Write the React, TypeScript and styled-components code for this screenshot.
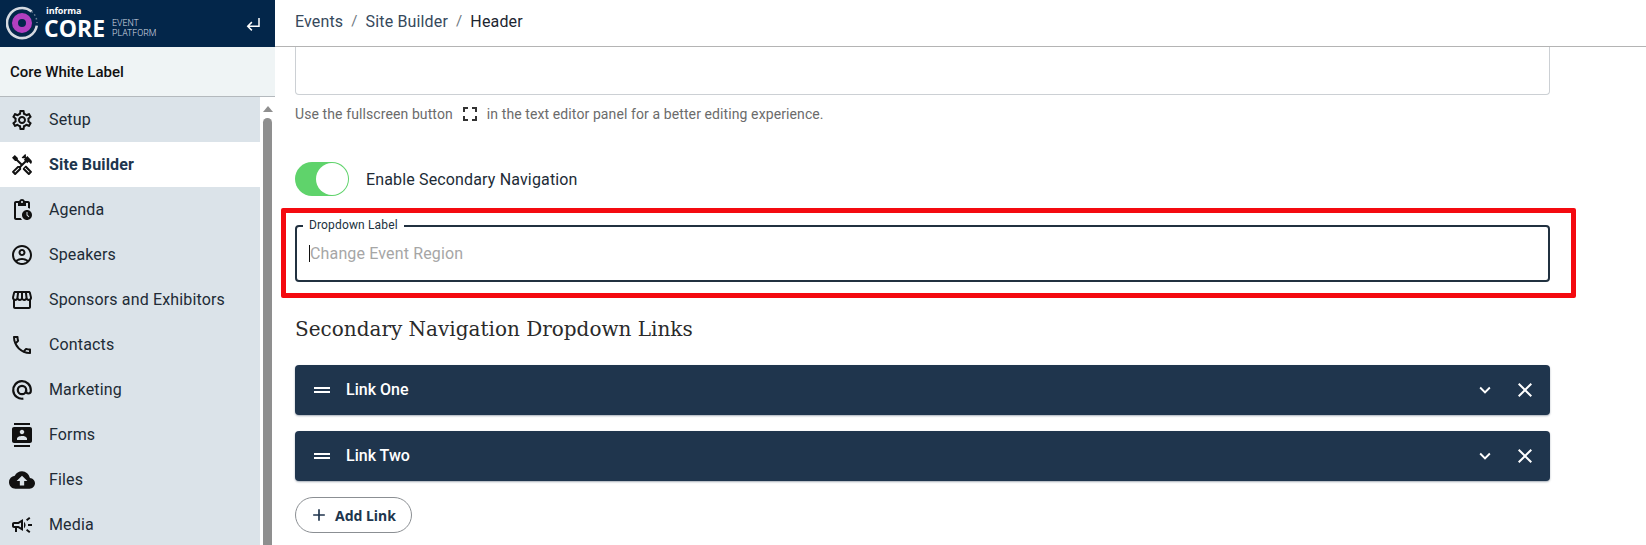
import styled, { createGlobalStyle } from 'styled-components';
import {
  MdAdd,
  MdClose,
  MdCloudUpload,
  MdContacts,
  MdDragHandle,
  MdExpandMore,
  MdFullscreen,
  MdOutlineAccountCircle,
  MdOutlineCall,
  MdOutlineCampaign,
  MdOutlineHandyman,
  MdOutlinePendingActions,
  MdOutlineSettings,
  MdOutlineStorefront,
} from 'react-icons/md';

const MarketingIcon = ({ size }: { size: number }) => (
  <svg width={size} height={size} viewBox="0 0 24 24" fill="none" stroke="currentColor" strokeWidth="2.4">
    <path d="M13.5 21.4A9.6 9.6 0 1 1 21.6 12v1.2a2.6 2.6 0 0 1-5.2 0V12" />
    <circle cx="12" cy="12" r="4.6" />
  </svg>
);

const navItems = [
  { label: 'Setup', icon: MdOutlineSettings, size: 24 },
  { label: 'Site Builder', icon: MdOutlineHandyman, size: 24, active: true },
  { label: 'Agenda', icon: MdOutlinePendingActions, size: 24 },
  { label: 'Speakers', icon: MdOutlineAccountCircle, size: 24 },
  { label: 'Sponsors and Exhibitors', icon: MdOutlineStorefront, size: 24 },
  { label: 'Contacts', icon: MdOutlineCall, size: 24 },
  { label: 'Marketing', icon: MarketingIcon, size: 22 },
  { label: 'Forms', icon: MdContacts, size: 24 },
  { label: 'Files', icon: MdCloudUpload, size: 26 },
  { label: 'Media', icon: MdOutlineCampaign, size: 24 },
];

const Logo = () => (
  <LogoWrap>
    <svg width="36" height="36" viewBox="0 0 36 36">
      <path d="M25.6 5.5A15 15 0 1 0 30.8 19.6" fill="none" stroke="#d5dae1" strokeWidth="2.6" />
      <path d="M25.6 5.5A15 15 0 0 1 31 17" fill="none" stroke="#6f8296" strokeWidth="1.5" strokeDasharray="1.5 2.5" />
      <circle cx="16" cy="17" r="7" fill="none" stroke="#b23fc0" strokeWidth="6" />
    </svg>
    <LogoText>
      <LogoBrand>informa</LogoBrand>
      <LogoLine>
        <LogoCore>CORE</LogoCore>
        <LogoSub>
          <span>EVENT</span>
          <span>PLATFORM</span>
        </LogoSub>
      </LogoLine>
    </LogoText>
  </LogoWrap>
);

const App = () => {
  return (
    <>
      <GlobalStyle />
      <Page>
        <Sidebar>
          <Brand>
            <Logo />
            <svg width="18" height="18" viewBox="0 0 24 24" fill="none" stroke="#fff" strokeWidth="2">
              <path d="M20 4v11H5M10.5 9.5 5 15l5.5 5.5" />
            </svg>
          </Brand>
          <EventName>Core White Label</EventName>
          <NavArea>
            <Nav>
              {navItems.map(item => (
                <NavItem key={item.label} $active={item.active}>
                  <NavIcon>
                    <item.icon size={item.size} />
                  </NavIcon>
                  {item.label}
                </NavItem>
              ))}
            </Nav>
            <Scrollbar>
              <ScrollArrow />
              <ScrollThumb />
            </Scrollbar>
          </NavArea>
        </Sidebar>
        <Main>
          <Breadcrumbs>
            <Crumb>Events</Crumb>
            <Slash>/</Slash>
            <Crumb>Site Builder</Crumb>
            <Slash>/</Slash>
            <Crumb $current>Header</Crumb>
          </Breadcrumbs>
          <Content>
            <EditorTail />
            <HelpText>
              Use the fullscreen button
              <MdFullscreen size={24} color="#333" />
              in the text editor panel for a better editing experience.
            </HelpText>
            <SwitchRow>
              <Switch>
                <SwitchKnob />
              </Switch>
              <SwitchLabel>Enable Secondary Navigation</SwitchLabel>
            </SwitchRow>
            <Field>
              <Legend>Dropdown Label</Legend>
              <Caret />
              <Placeholder>Change Event Region</Placeholder>
              <Highlight />
            </Field>
            <Heading>Secondary Navigation Dropdown Links</Heading>
            <LinkRow>
              <MdDragHandle size={24} />
              <LinkTitle>Link One</LinkTitle>
              <MdExpandMore size={22} />
              <CloseIcon size={24} />
            </LinkRow>
            <LinkRow>
              <MdDragHandle size={24} />
              <LinkTitle>Link Two</LinkTitle>
              <MdExpandMore size={22} />
              <CloseIcon size={24} />
            </LinkRow>
            <AddButton>
              <MdAdd size={20} />
              Add Link
            </AddButton>
          </Content>
        </Main>
      </Page>
    </>
  );
};

export default App;

const GlobalStyle = createGlobalStyle`
  html, body {
    margin: 0;
    padding: 0;
    background: #fff;
    overflow: hidden;
  }
  * {
    box-sizing: border-box;
  }
`;

const Page = styled.div`
  display: flex;
  width: 1646px;
  height: 545px;
  overflow: hidden;
  font-family: Roboto, "Liberation Sans", sans-serif;
  letter-spacing: 0.15px;
  color: #212b36;
`;

const Sidebar = styled.aside`
  display: flex;
  flex-direction: column;
  flex: 0 0 275px;
  height: 545px;
`;

const Brand = styled.div`
  display: flex;
  align-items: center;
  justify-content: space-between;
  height: 47px;
  padding: 0 13px 0 6px;
  background: #03264a;
  color: #fff;
`;

const LogoWrap = styled.div`
  display: flex;
  align-items: center;
  gap: 2px;
`;

const LogoText = styled.div`
  display: flex;
  flex-direction: column;
  margin-top: -4px;
`;

const LogoBrand = styled.div`
  margin-left: 2px;
  font-family: "Open Sans", sans-serif;
  font-size: 9px;
  font-weight: 700;
  line-height: 10px;
  letter-spacing: -0.1px;
`;

const LogoLine = styled.div`
  display: flex;
  align-items: center;
  gap: 7px;
  margin-top: 2px;
`;

const LogoCore = styled.div`
  font-family: "Open Sans", sans-serif;
  font-size: 23px;
  font-weight: 700;
  line-height: 20px;
  letter-spacing: 0;
`;

const LogoSub = styled.div`
  display: flex;
  flex-direction: column;
  font-size: 8.8px;
  font-weight: 300;
  line-height: 10px;
  letter-spacing: 0;
  color: #d5dce4;
`;

const EventName = styled.div`
  display: flex;
  align-items: center;
  height: 50px;
  padding-left: 10px;
  background: #eff4f5;
  border-bottom: 1px solid #b4b9bd;
  font-size: 15px;
  font-weight: 500;
  letter-spacing: 0;
  color: #111;
`;

const NavArea = styled.div`
  display: flex;
  flex: 1;
  min-height: 0;
`;

const Nav = styled.nav`
  flex: 0 0 260px;
  background: #dbe3e9;
`;

const NavItem = styled.div<{ $active?: boolean }>`
  display: flex;
  align-items: center;
  height: 45px;
  font-size: 16px;
  font-weight: ${p => (p.$active ? 700 : 400)};
  background: ${p => (p.$active ? '#fff' : 'transparent')};
  color: ${p => (p.$active ? '#20354d' : '#212b36')};
`;

const NavIcon = styled.span`
  display: flex;
  justify-content: center;
  flex: 0 0 49px;
  padding-right: 5px;
  color: #111;
`;

const Scrollbar = styled.div`
  display: flex;
  flex-direction: column;
  align-items: center;
  flex: 0 0 15px;
  padding-top: 9px;
`;

const ScrollArrow = styled.div`
  width: 0;
  height: 0;
  border-left: 5px solid transparent;
  border-right: 5px solid transparent;
  border-bottom: 6px solid #8f8f8f;
`;

const ScrollThumb = styled.div`
  flex: 1;
  width: 9px;
  margin-top: 6px;
  border-radius: 5px 5px 0 0;
  background: #8f8f8f;
`;

const Main = styled.main`
  display: flex;
  flex-direction: column;
  flex: 1;
  min-width: 0;
`;

const Breadcrumbs = styled.div`
  display: flex;
  align-items: center;
  gap: 8px;
  height: 47px;
  padding: 0 0 4px 20px;
  border-bottom: 1px solid #b4b4b4;
  font-size: 16px;
`;

const Crumb = styled.span<{ $current?: boolean }>`
  color: ${p => (p.$current ? '#1c2530' : '#36495c')};
`;

const Slash = styled.span`
  color: #6d7780;
  font-size: 15px;
`;

const Content = styled.div`
  display: flex;
  flex-direction: column;
  padding: 0 96px 0 20px;
`;

const EditorTail = styled.div`
  height: 48px;
  border: 1px solid #ccd0d4;
  border-top: none;
  border-radius: 0 0 4px 4px;
`;

const HelpText = styled.div`
  display: flex;
  align-items: center;
  gap: 5px;
  height: 22px;
  margin-top: 8px;
  font-size: 14px;
  letter-spacing: 0.1px;
  color: #6b6b6b;
`;

const SwitchRow = styled.div`
  display: flex;
  align-items: center;
  gap: 17px;
  margin-top: 37px;
`;

const Switch = styled.div`
  display: flex;
  justify-content: flex-end;
  align-items: center;
  width: 54px;
  height: 34px;
  padding-right: 1px;
  border-radius: 17px;
  background: #5fd36b;
`;

const SwitchKnob = styled.div`
  width: 32px;
  height: 32px;
  border-radius: 50%;
  background: #fff;
`;

const SwitchLabel = styled.span`
  font-size: 16px;
  color: #212b36;
`;

const Field = styled.div`
  position: relative;
  display: flex;
  align-items: center;
  height: 57px;
  margin-top: 29px;
  padding-left: 12px;
  border: 2px solid #213140;
  border-radius: 4px;
`;

const Legend = styled.span`
  position: absolute;
  top: -9px;
  left: 6px;
  padding: 0 6px;
  background: #fff;
  font-size: 12px;
  line-height: 15px;
  color: #213140;
`;

const Caret = styled.span`
  width: 1px;
  height: 17px;
  background: #111;
`;

const Placeholder = styled.span`
  font-size: 16px;
  color: #a6a6a6;
`;

/* red annotation box drawn over the screenshot */
const Highlight = styled.div`
  position: absolute;
  inset: -19px -28px -18px -16px;
  border: 5px solid #f40a10;
  border-radius: 2px;
  pointer-events: none;
`;

const Heading = styled.h2`
  margin: 33px 0 22px;
  font-family: "DejaVu Serif", serif;
  font-size: 20px;
  font-weight: 400;
  line-height: 28px;
  letter-spacing: 0;
  color: #2a2a2a;
`;

const LinkRow = styled.div`
  display: flex;
  align-items: center;
  gap: 12px;
  height: 50px;
  margin-bottom: 16px;
  padding: 0 13px 0 15px;
  border-radius: 4px;
  background: #1f354d;
  box-shadow: 0 1px 2px rgba(32, 53, 77, 0.4);
  letter-spacing: 0;
  color: #fff;
`;

const LinkTitle = styled.span`
  flex: 1;
  padding-bottom: 1px;
  font-size: 16px;
  font-weight: 500;
`;

const CloseIcon = styled(MdClose)`
  margin-left: 5px;
`;

const AddButton = styled.button`
  display: flex;
  align-items: center;
  gap: 6px;
  width: 117px;
  height: 36px;
  padding: 0 0 0 13px;
  border: 1px solid #8b8f93;
  border-radius: 18px;
  background: #fff;
  font-family: "Noto Sans", sans-serif;
  font-size: 14px;
  font-weight: 700;
  color: #20354d;
`;
